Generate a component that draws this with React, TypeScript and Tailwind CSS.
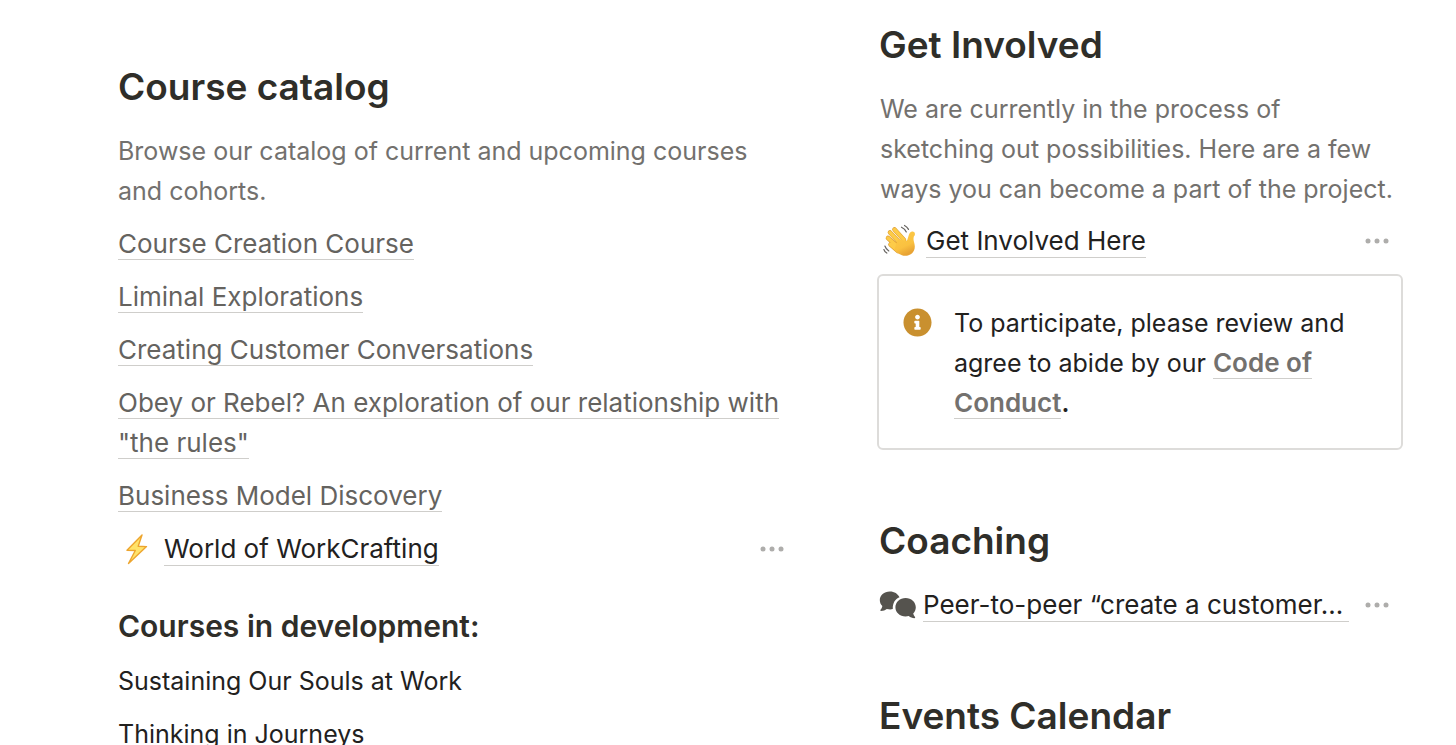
import { FaInfoCircle } from 'react-icons/fa';

const courses = [
  'Course Creation Course',
  'Liminal Explorations',
  'Creating Customer Conversations',
  'Obey or Rebel? An exploration of our relationship with "the rules"',
  'Business Model Discovery',
];

const upcoming = ['Sustaining Our Souls at Work', 'Thinking in Journeys'];

function WaveIcon() {
  return (
    <svg viewBox="0 0 34 34" className="h-[34px] w-[34px] shrink-0" aria-hidden="true">
      <defs>
        <linearGradient id="hand" x1="0" y1="0" x2="0.4" y2="1">
          <stop offset="0" stopColor="#fdcb48" />
          <stop offset="0.7" stopColor="#fac140" />
          <stop offset="1" stopColor="#e8a334" />
        </linearGradient>
      </defs>
      {/* four fingers, then the palm with the thumb */}
      <g stroke="#dd9c30" strokeWidth="4.600" strokeLinecap="round">
        <path d="M11.500 5.500 21 16M7 8.500 18 20M5 14 15 23M7.500 20.500 15 27" />
      </g>
      <g stroke="#fdcb48" strokeWidth="3.500" strokeLinecap="round">
        <path d="M11.500 5.500 21 16M7 8.500 18 20M5 14 15 23M7.500 20.500 15 27" />
      </g>
      <path
        d="M15 15l7 1.800c1.300.4 2.200-.2 2.500-1.500l1.400-4.500c.7-2.400 1.800-3.600 3.900-3.400 2 .2 2.400 1.900 2 3.800-1 .7-1.300 2-1.300 4 0 1.900 1.300 4.300 1.300 7.300 0 5.500-4.200 9.500-9.800 9.300-4.200-.1-7.400-2.500-10.800-6.300Z"
        fill="url(#hand)"
      />
      <path
        d="M18.500 3.200c2.200 1 3.800 2.600 4.800 4.700M21.500 1.500c1.800.9 3 2.100 4 3.900M1.900 22c.7 2.100 2 3.800 3.900 4.900M.9 25.500c.5 1.600 1.500 2.800 2.900 3.600"
        stroke="#66635f"
        strokeWidth="1.200"
        strokeLinecap="round"
        fill="none"
      />
    </svg>
  );
}

function BoltIcon() {
  return (
    <svg viewBox="0 0 24 32" className="h-8 w-6 shrink-0" aria-hidden="true">
      <path
        d="M17 2 2 17.200l8.300.3L3.500 30.500 21.500 13.600l-8.300-.4L17 2Z"
        fill="#ffe36a"
        stroke="#eda52f"
        strokeWidth="1.400"
        strokeLinejoin="round"
      />
    </svg>
  );
}

function CommentsIcon() {
  return (
    <svg viewBox="0 0 38 30" className="h-[30px] w-[38px] shrink-0" aria-hidden="true" fill="#55534e">
      <path d="M10.800 1.500C5.100 1.500.8 5.200.8 10c0 2.500 1 4.500 2.500 6.100-.1 1.500-.8 2.700-1.800 3.700-.4.500-.1 1.100.5 1.100 2.200 0 4.300-.8 5.800-2 2.300.6 4.300.6 6 .2C13.600 13 16 9.200 20.500 7.300 18.800 3.800 15.600 1.500 10.800 1.500Z" />
      <path d="M26.600 8c5.700 0 10.200 4.100 10.200 9.300 0 2.500-1 4.700-2.600 6.300.2 1.300.9 2.500 1.800 3.500.4.500.1 1.100-.5 1.100-2.200 0-4.200-.8-5.700-2.100-7 1.900-13.400-2.600-13.400-8.800 0-5.200 4.500-9.300 10.200-9.300Z" />
    </svg>
  );
}

function MoreButton({ label }: { label: string }) {
  return (
    <button type="button" aria-label={label} className="ml-auto flex h-10 w-6 shrink-0 items-center">
      <svg viewBox="0 0 24 6" className="h-[6px] w-6" fill="#aeadab">
        <circle cx="3" cy="3" r="2.500" />
        <circle cx="12" cy="3" r="2.500" />
        <circle cx="21" cy="3" r="2.500" />
      </svg>
    </button>
  );
}

export default function App() {
  return (
    <div className="flex h-screen gap-[89px] overflow-hidden bg-white pr-[53px] pl-[118px] font-['Inter',sans-serif] text-[25px] leading-10 text-[#22211e]">
      <main className="min-w-0 flex-[670] pt-[63px]">
        <h1 className="text-[37px] leading-12 font-semibold text-[#2f2e29]">Course catalog</h1>
        <p className="mt-5 text-[#73716e]">
          Browse our catalog of current and upcoming courses and cohorts.
        </p>
        <ul className="mt-[13px] flex flex-col gap-[13px] text-[26px]">
          {courses.map((course) => (
            <li key={course}>
              <a href="#" className="border-b border-[#cfcecb] text-[#65635f]">
                {course}
              </a>
            </li>
          ))}
        </ul>
        <div className="mt-[13px] flex items-center pr-1 text-[26px]">
          <div className="flex w-[46px] shrink-0 pl-[7px]">
            <BoltIcon />
          </div>
          <a href="#" className="border-b border-[#cfcecb] leading-8">
            World of WorkCrafting
          </a>
          <MoreButton label="More options for World of WorkCrafting" />
        </div>
        <h2 className="mt-[37px] text-[30px] font-semibold text-[#2f2e29]">Courses in development:</h2>
        <ul className="mt-[15px] flex flex-col gap-[13px]">
          {upcoming.map((course) => (
            <li key={course}>{course}</li>
          ))}
        </ul>
      </main>

      <aside className="min-w-0 flex-[526] pt-[21px]">
        <section>
          <h2 className="pl-[2px] text-[37px] leading-12 font-semibold text-[#2f2e29]">Get Involved</h2>
          <p className="mt-5 pr-2 pl-[3px] text-[#73716e]">
            We are currently in the process of sketching out possibilities. Here are a few ways you can
            become a part of the project.
          </p>
          <div className="mt-3 flex items-center pr-[14px] text-[26px]">
            <div className="flex w-[49px] shrink-0 pl-[6px]">
              <WaveIcon />
            </div>
            <a href="#" className="border-b border-[#cfcecb] leading-8">
              Get Involved Here
            </a>
            <MoreButton label="More options for Get Involved Here" />
          </div>
          <div className="mt-[13px] flex gap-[22px] rounded-md border-2 border-[#dddcda] px-6 pt-[27px] pb-[25px]">
            <FaInfoCircle className="mt-[5px] size-[29px] shrink-0 text-[#c9902f]" />
            <p>
              To participate, please review and agree to abide by our{' '}
              <a href="#" className="border-b border-[#cfcecb] text-[26px] font-semibold text-[#73716e]">
                Code of Conduct
              </a>
              <span className="font-semibold">.</span>
            </p>
          </div>
        </section>

        <section className="mt-[67px]">
          <h2 className="pl-[2px] text-[37px] leading-12 font-semibold text-[#2f2e29]">Coaching</h2>
          <div className="mt-5 flex items-center pr-[14px] text-[26px]">
            <div className="flex w-[46px] shrink-0 pl-[2px]">
              <CommentsIcon />
            </div>
            <a href="#" className="mr-4 min-w-0 grow border-b border-[#cfcecb] leading-8 whitespace-nowrap">
              Peer-to-peer “create a customer...
            </a>
            <MoreButton label="More options for Peer-to-peer" />
          </div>
        </section>

        <section className="mt-[67px]">
          <h2 className="pl-[2px] text-[37px] leading-12 font-semibold text-[#2f2e29]">Events Calendar</h2>
        </section>
      </aside>
    </div>
  );
}
